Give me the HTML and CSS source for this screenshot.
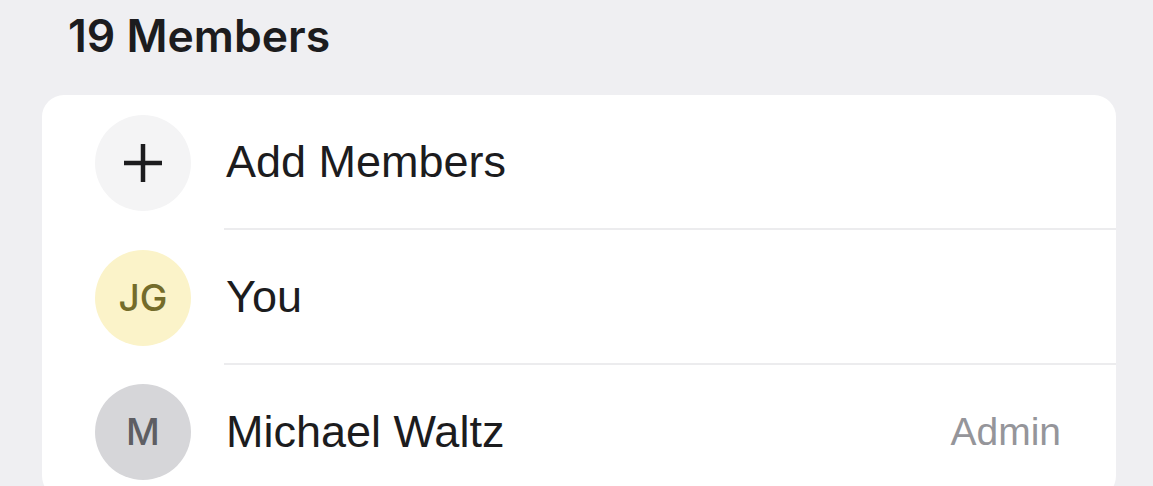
FILE: index.html
```html
<!DOCTYPE html>
<html>
<head>
<meta charset="utf-8">
<link rel="stylesheet" href="styles.css">
</head>
<body>
<div class="page">
  <h2 class="section-title">19 Members</h2>
  <div class="card">
    <div class="row">
      <div class="avatar avatar-add">
        <svg width="40" height="40" viewBox="0 0 40 40" aria-hidden="true">
          <path d="M20 1v38M1 20h38" stroke="#1c1c1e" stroke-width="4.5" stroke-linecap="butt" fill="none"/>
        </svg>
      </div>
      <div class="body"><span class="name">Add Members</span></div>
    </div>
    <div class="row">
      <div class="avatar avatar-jg">JG</div>
      <div class="body"><span class="name">You</span></div>
    </div>
    <div class="row">
      <div class="avatar avatar-m">M</div>
      <div class="body last"><span class="name">Michael Waltz</span><span class="role">Admin</span></div>
    </div>
  </div>
</div>
</body>
</html>
```

FILE: styles.css
```css
html, body {
  margin: 0;
  padding: 0;
  background: #efeff2;
  font-family: "Liberation Sans", Arial, sans-serif;
  color: #1c1c1e;
}
.page {
  width: 1153px;
  height: 486px;
  overflow: hidden;
  padding: 10px 37px 0 42px;
  box-sizing: border-box;
}
.section-title {
  margin: 0 0 33px 26px;
  font-family: Inter, "Liberation Sans", Arial, sans-serif;
  font-size: 44.5px;
  line-height: 52px;
  font-weight: 600;
  color: #1c1c1e;
}
.card {
  background: #ffffff;
  border-radius: 22px;
  overflow: hidden;
}
.row {
  display: flex;
  align-items: center;
}
.avatar {
  flex: none;
  width: 96px;
  height: 96px;
  border-radius: 50%;
  margin: 0 33px 0 53px;
  display: flex;
  align-items: center;
  justify-content: center;
  font-family: Inter, "Liberation Sans", Arial, sans-serif;
  font-weight: 500;
  font-size: 37px;
}
.avatar-add {
  background: #f4f4f5;
}
.avatar-jg {
  background: #fbf3c9;
  color: #746c2a;
}
.avatar-m {
  background: #d6d6d9;
  color: #5e5e63;
}
.body {
  flex: 1;
  height: 133px;
  display: flex;
  align-items: center;
  justify-content: space-between;
  border-bottom: 2px solid #ececee;
  padding: 0 55px 0 2px;
}
.body.last {
  border-bottom: none;
}
.name {
  font-size: 45px;
  color: #1c1c1e;
}
.role {
  font-size: 39px;
  color: #95959a;
}
```
